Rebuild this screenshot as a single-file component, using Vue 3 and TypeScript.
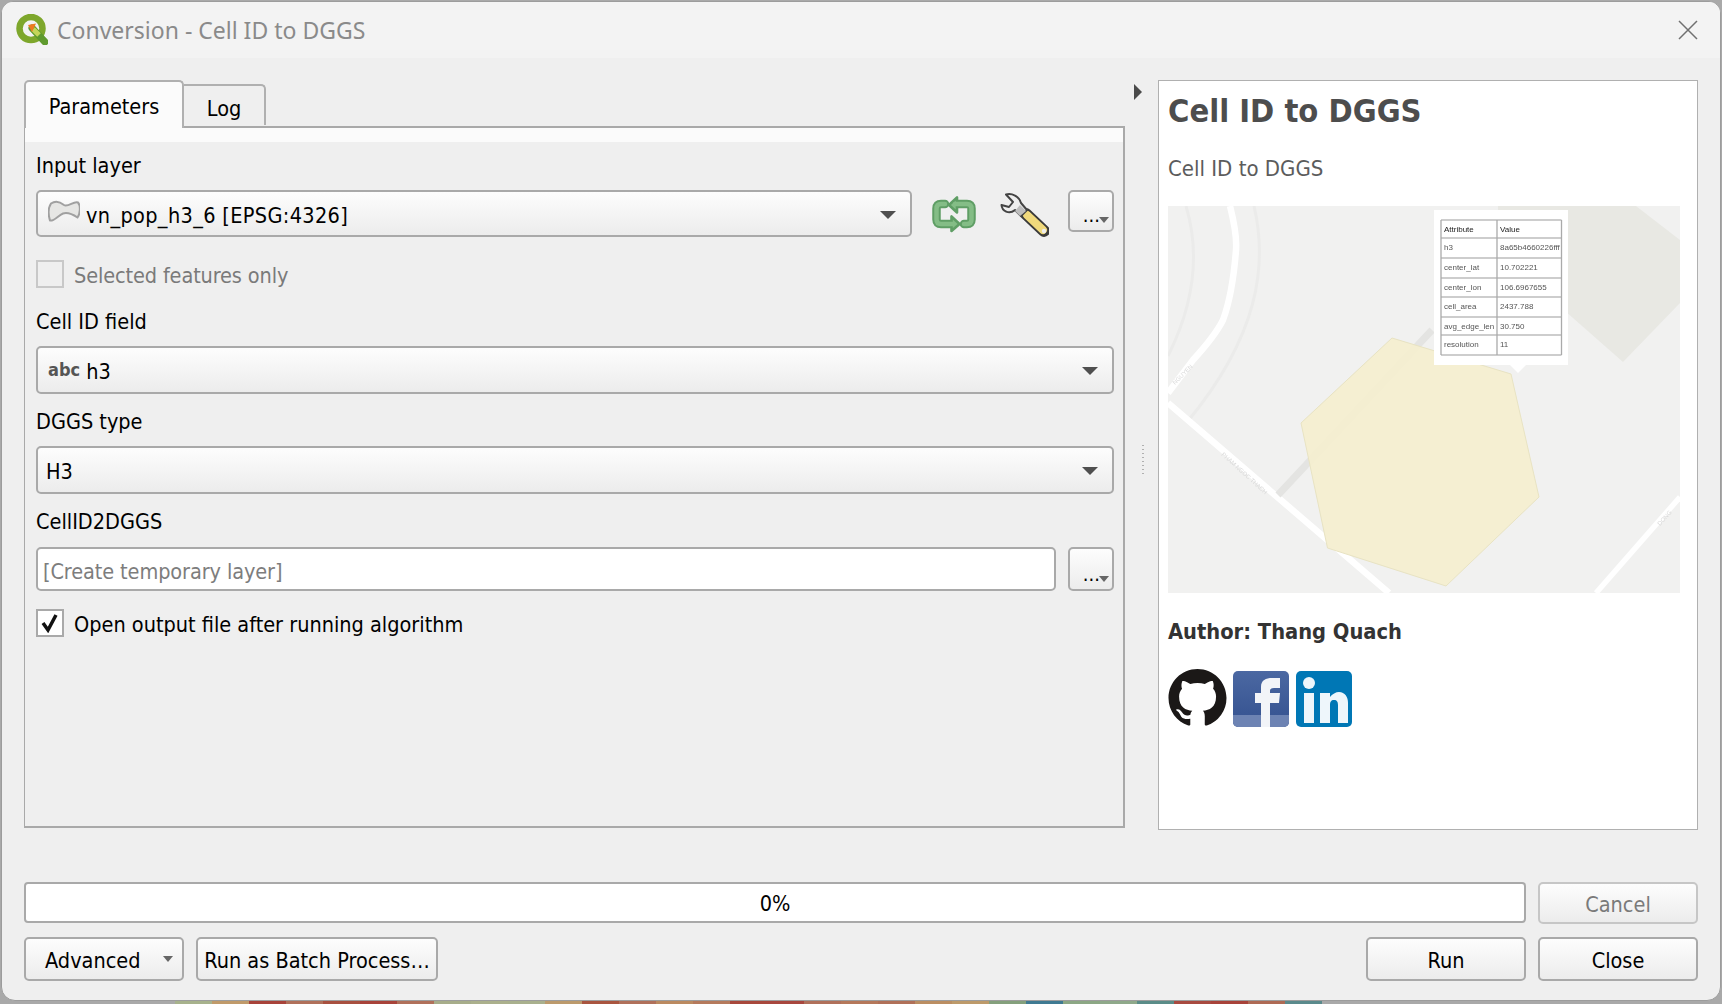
<script setup lang="ts">
const strip: string[] = ['#a7b28c','#c09a6a','#a8433a','#b0705a','#a8503f','#a8433a','#b0705a','#a7ad8a','#abb08c','#a9b08d','#bc9a6c','#a9553f','#b0705a','#bb8a60','#b57a5c','#a8483c','#a8473e','#b0705a','#b5785a','#b07058','#bb8e62','#bd9a6a','#84a07c','#3f7a92','#8ca784','#8fa98a','#5a8c88','#a84a40','#a8433a','#ae6a54','#5a8a8c']
const rows: [string, string][] = [
  ['Attribute', 'Value'], ['h3', '8a65b4660226fff'], ['center_lat', '10.702221'], ['center_lon', '106.6967655'],
  ['cell_area', '2437.788'], ['avg_edge_len', '30.750'], ['resolution', '11'],
]
const rowY: number[] = [14, 32, 52, 72, 91, 111, 129, 149]
</script>

<template>
  <div class="screen">
    <div class="dialog">
      <header class="titlebar">
        <svg class="logo" width="32" height="31" viewBox="0 0 32 31">
          <circle cx="15" cy="14.5" r="11.5" fill="none" stroke="#7ea72c" stroke-width="6.5" />
          <path d="M16 14 L29 28" stroke="#5f9a2e" stroke-width="7" stroke-linecap="round" />
          <path d="M17 15 L23 21" stroke="#c4d65a" stroke-width="5" />
          <path d="M12 11 L20 9.500 L16 18 Z" fill="#ee7b22" />
        </svg>
        <span class="title">Conversion - Cell ID to DGGS</span>
        <svg class="close" width="20" height="20" viewBox="0 0 20 20">
          <path d="M1 1 L19 19 M19 1 L1 19" stroke="#707070" stroke-width="1.500" />
        </svg>
      </header>

      <main class="workspace">
        <section class="left">
          <div class="tabs">
            <div class="tab active">Parameters</div>
            <div class="tab">Log</div>
          </div>
          <div class="pane">
            <div class="stripe"></div>
            <div class="form">
              <div class="label first">Input layer</div>
              <div class="row input-row">
                <div class="combo grow">
                  <svg class="layer" width="32" height="23" viewBox="0 0 32 23">
                    <path d="M3 3.500 C8 0 13 2.500 16 5 C20 7.500 26 0.500 30 2.500 C33 6 32 14 29.500 17.500 C25 14.500 20 12 15 13.500 C10 15.500 6 21.500 2 20.500 C0 14 0 8 3 3.500 Z" fill="#e6e6e4" stroke="#a0a0a0" stroke-width="2" />
                  </svg>
                  <span class="layer-name">vn_pop_h3_6 [EPSG:4326]</span>
                  <i class="caret"></i>
                </div>
                <svg class="iter" width="44" height="38" viewBox="0 0 44 38">
                  <g fill="none" stroke="#5f9e65" stroke-width="8.500" stroke-linejoin="round" stroke-linecap="round">
                    <path d="M24 9 H35 Q39.500 9 39.500 13.500 V24.500 Q39.500 29 35 29 H32" />
                    <path d="M13 9 H9 Q4.500 9 4.500 13.500 V24.500 Q4.500 29 9 29 H20" />
                  </g>
                  <path d="M17 10 L25 2.500 V17.500 Z M27.500 29 L19.500 21.500 V36 Z" fill="#84bd86" stroke="#5f9e65" stroke-width="2.600" stroke-linejoin="round" />
                  <g fill="none" stroke="#84bd86" stroke-width="4.500" stroke-linecap="round">
                    <path d="M23 9 H35 Q39.500 9 39.500 13.500 V24.500 Q39.500 29 35 29 H32" />
                    <path d="M13 9 H9 Q4.500 9 4.500 13.500 V24.500 Q4.500 29 9 29 H21" />
                  </g>
                </svg>
                <svg class="wrench" width="50" height="46" viewBox="0 0 50 46">
                  <path d="M27 21 L45 38" stroke="#3a3a3a" stroke-width="12" stroke-linecap="round" />
                  <path d="M28 22 L44 37" stroke="#f0d97c" stroke-width="8" stroke-linecap="round" />
                  <path d="M7 1.500 C13 0 20 3 22 10 L28 17 L22 23 L16 17 C10 22 3 18 2.500 12 L10 14 L14 9 Z" fill="#eeeeee" stroke="#444444" stroke-width="2" stroke-linejoin="round" />
                  <path d="M21 12 L27 18 L21 23 L16 18 Z" fill="#bdbdbd" />
                  <circle cx="45" cy="38" r="2.200" fill="#eeeeee" />
                </svg>
                <div class="dots-btn"><span>...</span><i class="caret small"></i></div>
              </div>
              <label class="check disabled"><i class="box"></i><span>Selected features only</span></label>
              <div class="label second">Cell ID field</div>
              <div class="combo wide"><b class="abc">abc</b><span>h3</span><i class="caret"></i></div>
              <div class="label third">DGGS type</div>
              <div class="combo wide plain"><span>H3</span><i class="caret"></i></div>
              <div class="label fourth">CellID2DGGS</div>
              <div class="row output-row">
                <div class="field grow">[Create temporary layer]</div>
                <div class="dots-btn tall"><span>...</span><i class="caret small"></i></div>
              </div>
              <label class="check open"><i class="box on">
                <svg width="20" height="20" viewBox="0 0 20 20"><path d="M3 10 L8 17 L16 2" fill="none" stroke="#111" stroke-width="3.500" /></svg>
              </i><span>Open output file after running algorithm</span></label>
            </div>
          </div>
        </section>

        <div class="splitter">
          <i class="collapse"></i>
          <i class="grip"></i>
        </div>

        <aside class="help">
          <h1>Cell ID to DGGS</h1>
          <p class="desc">Cell ID to DGGS</p>
          <svg class="map" width="512" height="387" viewBox="0 0 512 387">
            <rect width="512" height="387" fill="#f1f1f0" />
            <path d="M330 0 H468 L512 34 V97 L455 156 L380 90 L330 40 Z" fill="#e8e8e3" />
            <g fill="none" stroke="#ebebea" stroke-width="3">
              <path d="M18 0 C30 40 30 90 0 150" />
              <path d="M86 0 C100 60 90 130 20 215" />
            </g>
            <path d="M62 0 C66 16 69 32 68 44 C66 70 62 95 55 114 C48 128 36 142 25 154 L0 187" fill="none" stroke="#fff" stroke-width="6.500" />
            <path d="M0 197 L107 289 L221 387" fill="none" stroke="#fff" stroke-width="6.500" />
            <path d="M512 291 L428 387" fill="none" stroke="#fff" stroke-width="5.500" />
            <path d="M110 289 L264 124" fill="none" stroke="#e4e4e2" stroke-width="7" />
            <text class="road" transform="translate(7 179) rotate(-45)">NGUYEN</text>
            <text class="road" transform="translate(53 249) rotate(42)">PHAM NGOC THACH</text>
            <text class="road" transform="translate(492 320) rotate(-48)">DONG</text>
            <polygon points="224,132 343,168 371,291 278,380 159.500,342 133,217" fill="#f4eed0" fill-opacity=".95" stroke="#e8e3c3" />
            <rect x="266" y="4" width="134" height="155" fill="#fff" />
            <polygon points="342,159 358,159 350,167" fill="#fff" />
            <g class="tbl">
              <line v-for="y in rowY" :key="y" x1="273" x2="393.500" :y1="y" :y2="y" stroke="#bdbdbd" stroke-width="1.300" />
              <line x1="273" x2="273" y1="14" y2="149" stroke="#aaa" stroke-width="1.300" />
              <line x1="329" x2="329" y1="14" y2="149" stroke="#aaa" stroke-width="1.300" />
              <line x1="393.500" x2="393.500" y1="14" y2="149" stroke="#aaa" stroke-width="1.300" />
              <g v-for="(r, i) in rows" :key="r[0]">
                <text class="cell" :class="{ head: i === 0 }" x="276" :y="rowY[i] + 12">{{ r[0] }}</text>
                <text class="cell" :class="{ head: i === 0 }" x="332" :y="rowY[i] + 12">{{ r[1] }}</text>
              </g>
            </g>
          </svg>
          <p class="author">Author: Thang Quach</p>
          <div class="social">
            <svg width="59" height="58" viewBox="0 0 16 16">
              <path fill="#1b1817" d="M8 0C3.58 0 0 3.58 0 8c0 3.54 2.29 6.53 5.47 7.59.4.07.55-.17.55-.38 0-.19-.01-.82-.01-1.49-2.01.37-2.53-.49-2.69-.94-.09-.23-.48-.94-.82-1.13-.28-.15-.68-.52-.01-.53.63-.01 1.08.58 1.23.82.72 1.21 1.87.87 2.33.66.07-.52.28-.87.51-1.07-1.78-.2-3.64-.89-3.64-3.95 0-.87.31-1.59.82-2.15-.08-.2-.36-1.02.08-2.12 0 0 .67-.21 2.2.82.64-.18 1.32-.27 2-.27.68 0 1.36.09 2 .27 1.53-1.04 2.2-.82 2.2-.82.44 1.1.16 1.92.08 2.12.51.56.82 1.27.82 2.15 0 3.07-1.87 3.75-3.65 3.95.29.25.54.73.54 1.48 0 1.07-.01 1.93-.01 2.2 0 .21.15.46.55.38A8.013 8.013 0 0016 8c0-4.42-3.58-8-8-8z" />
            </svg>
            <svg class="fb" width="56" height="56" viewBox="0 0 56 56">
              <defs>
                <linearGradient id="fbg" x1="0" y1="0" x2="0" y2="1">
                  <stop offset="0" stop-color="#4b68a2" />
                  <stop offset="1" stop-color="#34518f" />
                </linearGradient>
              </defs>
              <rect width="56" height="56" rx="5" fill="url(#fbg)" />
              <path d="M0 44 H56 V51 A5 5 0 0 1 51 56 H5 A5 5 0 0 1 0 51 Z" fill="#6d83b3" />
              <path d="M28 56 V32 H22 V22 H28 V16 C28 9 33 7 39 7 H47 V17 H41 C38 17 37 18 37 20 V22 H47 L46 32 H37 V56 Z" fill="#f2f4f8" />
            </svg>
            <svg width="56" height="56" viewBox="0 0 56 56">
              <rect width="56" height="56" rx="5" fill="#0077b5" />
              <circle cx="13" cy="12" r="6" fill="#eef6fb" />
              <path d="M8 22 H18 V52 H8 Z M24 22 H34 V26 C36 23 40 21 43 21 C49 21 52 26 52 32 V52 H42 V34 C42 31 41 29 38 29 C35 29 34 31 34 34 V52 H24 Z" fill="#eef6fb" />
            </svg>
          </div>
        </aside>
      </main>

      <footer class="bottom">
        <div class="row progress-row">
          <div class="progress">0%</div>
          <div class="btn cancel">Cancel</div>
        </div>
        <div class="row button-row">
          <div class="btn advanced"><span>Advanced</span><i class="caret small"></i></div>
          <div class="btn batch">Run as Batch Process…</div>
          <div class="spacer"></div>
          <div class="btn">Run</div>
          <div class="btn">Close</div>
        </div>
      </footer>
    </div>
    <div class="strip">
      <i v-for="(c, i) in strip" :key="i" :style="{ background: c }"></i>
    </div>
  </div>
</template>

<style scoped>
.screen {
  width: 1722px;
  height: 1004px;
  overflow: hidden;
  background: #a9a9a9;
  display: flex;
  flex-direction: column;
  font-family: "DejaVu Sans Condensed", "DejaVu Sans", sans-serif;
  font-stretch: condensed;
  font-size: 21.5px;
  color: #000;
}
.dialog {
  box-sizing: border-box;
  flex: none;
  width: 1720px;
  height: 1000px;
  margin: 1px 1px 0;
  border: 1px solid #9c9c9c;
  border-radius: 12px 12px 14px 14px;
  background: #efefef;
  display: flex;
  flex-direction: column;
  overflow: hidden;
}
.titlebar {
  box-sizing: border-box;
  flex: none;
  height: 56px;
  background: #f3f3f3;
  display: flex;
  align-items: center;
  padding: 0 22px 1px 14px;
}
.title {
  margin-left: 9px;
  flex: 1;
  font-family: "Noto Sans", sans-serif;
  font-stretch: normal;
  font-size: 23px;
  color: #8a8a8a;
}
.workspace {
  flex: none;
  height: 750px;
  margin-top: 22px;
  padding: 0 22px;
  display: flex;
}
.left {
  width: 1101px;
  flex: none;
  display: flex;
  flex-direction: column;
}
.tabs {
  flex: none;
  height: 46px;
  display: flex;
  align-items: flex-end;
  position: relative;
  z-index: 1;
}
.tab {
  box-sizing: border-box;
  height: 41px;
  width: 82px;
  margin-bottom: 1px;
  border: 2px solid #b0b0b0;
  border-bottom: none;
  border-left-width: 0;
  border-radius: 0 5px 0 0;
  background: #efefef;
  display: flex;
  align-items: center;
  justify-content: center;
  padding-top: 5px;
}
.tab.active {
  width: 160px;
  height: 48px;
  margin-top: 0;
  margin-bottom: -2px;
  border: 2px solid #b0b0b0;
  border-bottom: none;
  border-radius: 5px 5px 0 0;
  background: #fbfbfb;
  padding-top: 2px;
  padding-bottom: 0;
}
.pane {
  box-sizing: border-box;
  height: 702px;
  border: 2px solid #a9a9a9;
  border-left-width: 1px;
  background: #efefef;
}
.stripe {
  height: 14px;
  background: #fbfbfb;
}
.form {
  padding: 0 9px 0 11px;
  display: flex;
  flex-direction: column;
}
.label {
  height: 26px;
  line-height: 26px;
  margin-top: 15px;
}
.label.first { margin-top: 11px; }
.label.second { margin-top: 21px; }
.label.fourth { margin-top: 15px; }
.row {
  display: flex;
  align-items: flex-start;
}
.input-row {
  margin-top: 11px;
  height: 47px;
}
.grow {
  flex: 1;
  min-width: 0;
}
.combo {
  box-sizing: border-box;
  height: 47px;
  border: 2px solid #a9a9a9;
  border-radius: 5px;
  background: linear-gradient(#fdfdfd, #ececec);
  display: flex;
  align-items: center;
  padding: 2px 14px 0 10px;
}
.combo.wide {
  height: 48px;
  margin-top: 11px;
}
.combo.plain { padding-left: 8px; }
.layer-name {
  letter-spacing: 0.35px;
  margin-top: 2px;
}
.layer { margin: -7px 6px 0 0; }
.abc {
  font-size: 18px;
  color: #555;
  margin: -3px 6px 0 0;
  font-family: "DejaVu Sans", sans-serif;
  font-stretch: condensed;
}
.caret {
  width: 0;
  height: 0;
  margin-left: auto;
  border-left: 8px solid transparent;
  border-right: 8px solid transparent;
  border-top: 8px solid #4f4f4f;
}
.caret.small {
  border-left-width: 5.5px;
  border-right-width: 5.5px;
  border-top-width: 6px;
  border-top-color: #666;
}
.iter { margin: 5px 23px 0 20px; }
.wrench { margin: 3px 19px 0 0; }
.dots-btn {
  box-sizing: border-box;
  flex: none;
  width: 46px;
  height: 42px;
  border: 2px solid #a9a9a9;
  border-radius: 5px;
  background: linear-gradient(#fdfdfd, #ececec);
  display: flex;
  align-items: flex-end;
  justify-content: flex-end;
  padding: 0 3px 5px 0;
  line-height: 20px;
  font-size: 20px;
}
.dots-btn.tall { height: 44px; margin-left: 12px; }
.dots-btn .caret { margin: 0 0 2px -1px; }
.check {
  height: 28px;
  display: flex;
  align-items: center;
  gap: 10px;
}
.check span { margin-top: 3px; }
.check.disabled { margin-top: 23px; color: #7a7a7a; letter-spacing: -0.12px; }
.check.open { margin-top: 18px; }
.box {
  box-sizing: border-box;
  width: 28px;
  height: 28px;
  border: 2px solid #c8c8c8;
  background: #efefef;
  display: flex;
  align-items: center;
  justify-content: center;
}
.box.on {
  border-color: #a9a9a9;
  background: #fff;
}
.output-row {
  margin-top: 12px;
  height: 44px;
}
.field {
  box-sizing: border-box;
  height: 44px;
  border: 2px solid #a9a9a9;
  border-radius: 5px;
  background: #fff;
  color: #7d7d7d;
  display: flex;
  align-items: center;
  padding: 5px 0 0 5px;
  letter-spacing: -0.1px;
}
.splitter {
  flex: none;
  width: 33px;
  display: flex;
  flex-direction: column;
}
.collapse {
  width: 0;
  height: 0;
  margin: 4px 0 0 9px;
  border-top: 8px solid transparent;
  border-bottom: 8px solid transparent;
  border-left: 8px solid #4a4a4a;
}
.grip {
  width: 2px;
  height: 32px;
  margin: 345px 0 0 17px;
  background: repeating-linear-gradient(#b0b0b0 0 1.500px, transparent 1.500px 4px);
}
.help {
  box-sizing: border-box;
  flex: none;
  width: 540px;
  height: 750px;
  border: 1px solid #b0b0b0;
  background: #fff;
  padding: 0 0 0 9px;
  font-size: 22px;
  color: #4d4d4d;
}
.help h1 {
  margin: 10px 0 0;
  height: 40px;
  line-height: 40px;
  font-family: "DejaVu Sans", sans-serif;
  font-stretch: condensed;
  font-size: 32.4px;
  font-weight: bold;
  color: #4d4d4d;
}
.desc {
  margin: 25px 0 0;
  height: 26px;
  line-height: 26px;
  color: #5c5c5c;
}
.map {
  display: block;
  margin-top: 24px;
  filter: blur(0.5px);
}
.road {
  font-family: "Liberation Sans", sans-serif;
  font-size: 6px;
  fill: #d9d9d9;
}
.cell {
  font-family: "Liberation Sans", sans-serif;
  font-size: 8px;
  fill: #555;
}
.cell.head { fill: #222; }
.author {
  margin: 26px 0 0;
  height: 26px;
  line-height: 26px;
  font-size: 21.7px;
  font-weight: bold;
  color: #333;
}
.social {
  margin-top: 24px;
  display: flex;
  align-items: flex-end;
  gap: 7px;
}
.fb { margin-left: -1px; }
.bottom {
  flex: none;
  margin-top: 52px;
  padding: 0 22px;
  display: flex;
  flex-direction: column;
  gap: 13px;
}
.progress-row {
  height: 42px;
  gap: 12px;
}
.progress {
  box-sizing: border-box;
  flex: 1;
  height: 41px;
  border: 2px solid #a9a9a9;
  border-radius: 4px;
  background: #fff;
  display: flex;
  align-items: center;
  justify-content: center;
  padding-top: 2px;
}
.btn {
  box-sizing: border-box;
  flex: none;
  width: 160px;
  height: 44px;
  border: 2px solid #a9a9a9;
  border-radius: 5px;
  background: linear-gradient(#fdfdfd, #ececec);
  display: flex;
  align-items: center;
  justify-content: center;
  padding-top: 2px;
}
.btn.cancel {
  height: 42px;
  color: #7a7a7a;
  border-color: #c6c6c6;
}
.button-row { gap: 12px; }
.spacer { flex: 1; }
.btn.advanced {
  justify-content: flex-start;
  padding: 2px 9px 0 19px;
}
.btn.advanced .caret { margin-top: -2px; }
.btn.batch { width: 242px; }
.strip {
  flex: none;
  height: 3px;
  display: flex;
  padding-left: 175px;
}
.strip i {
  width: 37px;
  height: 100%;
}
</style>
